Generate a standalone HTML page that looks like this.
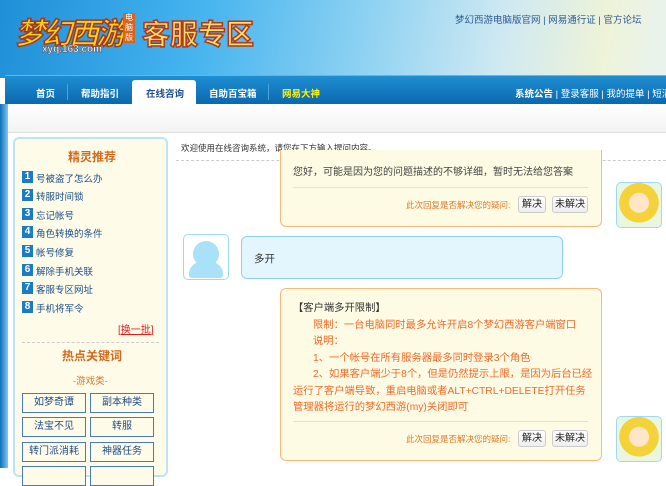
<!DOCTYPE html><html><head><meta charset="utf-8"><style>
*{margin:0;padding:0;box-sizing:border-box}
body{width:666px;height:468px;overflow:hidden;position:relative;font-family:"Liberation Sans","Noto Sans CJK SC",sans-serif;font-size:12px;background:#fff;color:#333}
.a{position:absolute;white-space:nowrap}
#hd{left:0;top:0;width:666px;height:78px;background:linear-gradient(100deg,#1f8fd8 0%,#45b4ef 30%,#8fd2f2 55%,#cfe9f2 75%,#eef3d8 90%,#e8f3f0 100%)}
#nav{left:5px;top:75px;width:661px;height:30px;background:linear-gradient(#1f8ed2,#0a67ad);border-top:1px solid #5fb7e8}
.nv{top:86px;color:#fff;font-weight:bold;font-size:9.5px}
.sep{top:84px;width:1px;height:16px;background:#4ea3d8}
#bar{left:7px;top:104px;width:659px;height:29px;background:linear-gradient(#fff,#f3f3f3);border-bottom:1px solid #ddd}
#ls{left:0;top:104px;width:8px;height:364px;background:linear-gradient(90deg,#0c6fb8,#7ec8ef)}
#lp{left:13px;top:137px;width:155px;height:340px;background:#fefbe8;border:2px solid #bfe3f6;border-radius:6px}
.num{left:22px;width:11px;height:12px;background:#1b7cc4;color:#fff;font-size:10px;font-weight:bold;text-align:center;line-height:12px}
.it{left:36px;font-size:9.5px;color:#1c4f8a}
.kb{width:64px;height:20px;border:1px solid #4a7bb8;font-size:10px;color:#244d88;text-align:center;line-height:18px;background:#fefbe8}
.bub{border-radius:6px}
.btn{width:28px;height:17px;border:1px solid #ccc;border-radius:3px;background:linear-gradient(#fff,#eee);font-size:10px;text-align:center;line-height:15px;color:#222}
.av{width:46px;height:46px;border:1px solid #9ed8f6;border-radius:5px;background:#fff}
.or{color:#f06a2a}
.q{font-size:8.5px;color:#e07a2a}
</style></head><body>
<div id="hd" class="a"></div>
<div class="a" style="left:15px;top:9px;font-size:30px;font-weight:bold;color:#f9d21b;-webkit-text-stroke:1.5px #a6361b;letter-spacing:-3px;font-style:italic">梦幻西游</div>
<div class="a" style="left:123px;top:13px;width:12px;height:30px;background:#d8641d;color:#fff;font-size:8px;line-height:10px;text-align:center;white-space:normal">电脑版</div>
<div class="a" style="left:42px;top:44px;font-size:10px;font-weight:bold;color:#fff;-webkit-text-stroke:.4px #7a2f12">xyq.163.com</div>
<div class="a" style="left:142px;top:13px;font-size:28px;font-weight:bold;color:#fde06a;-webkit-text-stroke:1.5px #b3361d">客服专区</div>
<div class="a" style="left:455px;top:12px;font-size:9.5px;color:#2f5a93">梦幻西游电脑版官网 | 网易通行证 | 官方论坛</div>
<div id="nav" class="a"></div>
<div class="a" style="left:132px;top:80px;width:64px;height:25px;background:#fff;border-radius:3px 3px 0 0"></div>
<div class="a nv" style="left:36px">首页</div>
<div class="a sep" style="left:67px"></div>
<div class="a nv" style="left:81px">帮助指引</div>
<div class="a nv" style="left:146px;color:#1d4f8c">在线咨询</div>
<div class="a nv" style="left:209px">自助百宝箱</div>
<div class="a sep" style="left:268px"></div>
<div class="a nv" style="left:282px;color:#fff200">网易大神</div>
<div class="a nv" style="left:515px;font-weight:normal"><b>系统公告</b> | 登录客服 | 我的提单 | 短消息</div>
<div id="bar" class="a"></div>
<div id="ls" class="a"></div>
<div id="lp" class="a"></div>
<div class="a" style="left:68px;top:148px;font-size:12px;font-weight:bold;color:#d2691e">精灵推荐</div>
<div class="a num" style="top:171px">1</div><div class="a it" style="top:171px">号被盗了怎么办</div>
<div class="a num" style="top:189px">2</div><div class="a it" style="top:189px">转服时间锁</div>
<div class="a num" style="top:208px">3</div><div class="a it" style="top:208px">忘记帐号</div>
<div class="a num" style="top:226px">4</div><div class="a it" style="top:226px">角色转换的条件</div>
<div class="a num" style="top:245px">5</div><div class="a it" style="top:245px">帐号修复</div>
<div class="a num" style="top:264px">6</div><div class="a it" style="top:264px">解除手机关联</div>
<div class="a num" style="top:282px">7</div><div class="a it" style="top:282px">客服专区网址</div>
<div class="a num" style="top:301px">8</div><div class="a it" style="top:301px">手机将军令</div>
<div class="a" style="left:118px;top:321px;font-size:10px;color:#e02020">[<u>换一批</u>]</div>
<div class="a" style="left:22px;top:342px;width:137px;border-top:1px dashed #ccc"></div>
<div class="a" style="left:62px;top:347px;font-size:12px;font-weight:bold;color:#d2691e">热点关键词</div>
<div class="a" style="left:73px;top:373px;font-size:9.5px;color:#d27a2a">-游戏类-</div>
<div class="a kb" style="left:22px;top:393px">如梦奇谭</div><div class="a kb" style="left:90px;top:393px">副本种类</div>
<div class="a kb" style="left:22px;top:417px">法宝不见</div><div class="a kb" style="left:90px;top:417px">转服</div>
<div class="a kb" style="left:22px;top:442px">转门派消耗</div><div class="a kb" style="left:90px;top:442px">神器任务</div>
<div class="a kb" style="left:22px;top:466px"></div><div class="a kb" style="left:90px;top:466px"></div>
<div class="a" style="left:181px;top:142px;font-size:8.5px;color:#333">欢迎使用在线咨询系统，请您在下方输入提问内容。</div>
<div class="a" style="left:176px;top:160px;width:490px;border-top:1px dashed #ccc"></div>
<div class="a bub" style="left:280px;top:150px;width:322px;height:77px;background:#fefbe4;border:1px solid #f8b878;border-top:none;border-radius:0 0 6px 6px"></div>
<div class="a" style="left:293px;top:163px;font-size:10px;color:#444">您好，可能是因为您的问题描述的不够详细，暂时无法给您答案</div>
<div class="a" style="left:293px;top:187px;width:295px;border-top:1px solid #e8e2c8"></div>
<div class="a q" style="left:406px;top:199px">此次回复是否解决您的疑问:</div>
<div class="a btn" style="left:518px;top:196px">解决</div>
<div class="a btn" style="left:552px;top:196px;width:36px">未解决</div>
<div class="a av" style="left:616px;top:182px;background:radial-gradient(circle at 50% 45%,#ffe6c8 0 30%,#f5d23a 31% 60%,#e9f6e0 61%)"></div>
<div class="a av" style="left:183px;top:234px;background:#fff"></div>
<div class="a" style="left:193px;top:241px;width:26px;height:26px;border-radius:50%;background:#a8e1f8"></div>
<div class="a" style="left:189px;top:262px;width:34px;height:16px;border-radius:12px 12px 3px 3px;background:#a8e1f8"></div>
<div class="a bub" style="left:241px;top:236px;width:322px;height:43px;background:#e4f6fd;border:1px solid #8fd0f2"></div>
<div class="a" style="left:254px;top:251px;font-size:10.5px;color:#333">多开</div>
<div class="a bub" style="left:280px;top:288px;width:322px;height:173px;background:#fefbe4;border:1px solid #f8b878"></div>
<div class="a" style="left:293px;top:301px;font-size:10.3px;line-height:16.5px;width:300px;white-space:normal">
<div style="color:#333">【客户端多开限制】</div>
<div class="or" style="padding-left:20px">限制：一台电脑同时最多允许开启8个梦幻西游客户端窗口</div>
<div class="or" style="padding-left:20px">说明：</div>
<div class="or" style="padding-left:20px">1、一个帐号在所有服务器最多同时登录3个角色</div>
<div class="or" style="padding-left:20px">2、如果客户端少于8个，但是仍然提示上限，是因为后台已经</div>
<div class="or">运行了客户端导致，重启电脑或者ALT+CTRL+DELETE打开任务</div>
<div class="or">管理器将运行的梦幻西游(my)关闭即可</div>
</div>
<div class="a" style="left:293px;top:421px;width:295px;border-top:1px solid #e8e2c8"></div>
<div class="a q" style="left:406px;top:433px">此次回复是否解决您的疑问:</div>
<div class="a btn" style="left:518px;top:430px">解决</div>
<div class="a btn" style="left:552px;top:430px;width:36px">未解决</div>
<div class="a av" style="left:616px;top:416px;background:radial-gradient(circle at 50% 45%,#ffe6c8 0 30%,#f5d23a 31% 60%,#e9f6e0 61%)"></div>
</body></html>
